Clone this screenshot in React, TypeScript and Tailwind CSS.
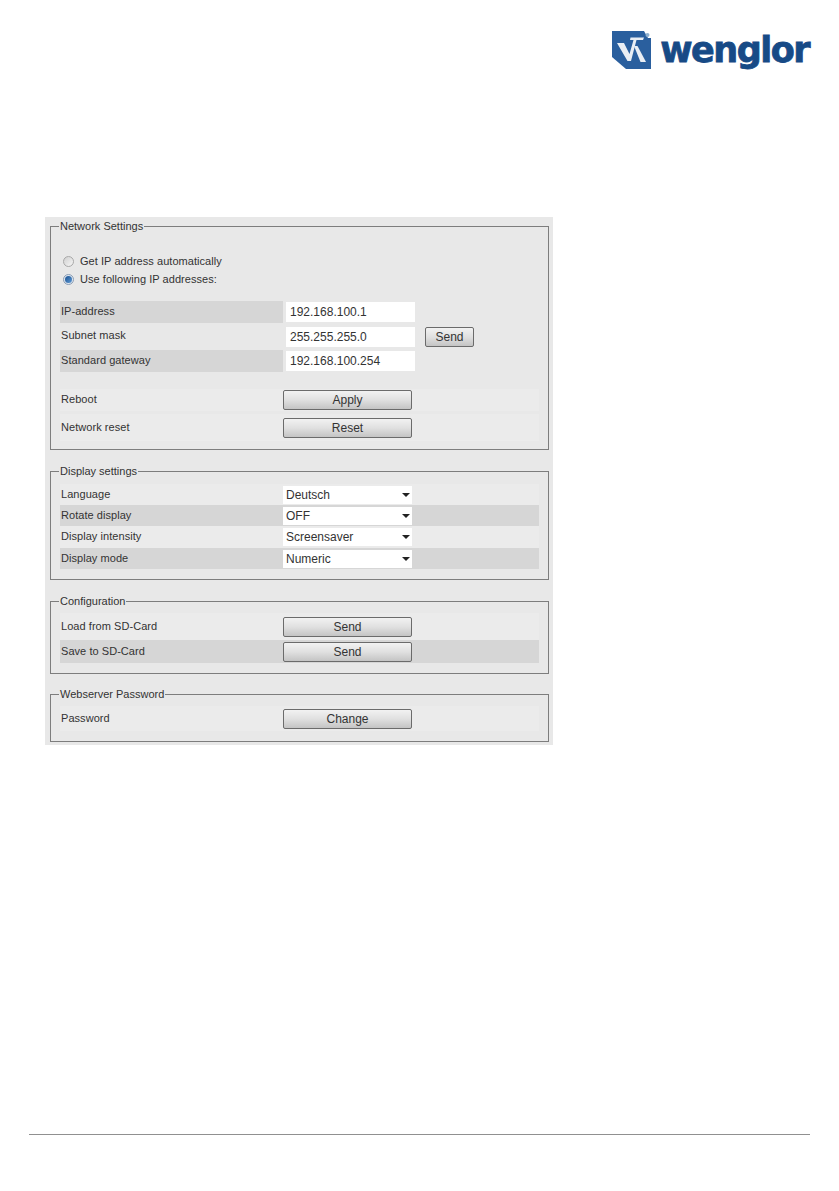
import type { ReactNode } from 'react';

const font = "font-['Liberation_Sans',Arial,sans-serif]";

function Group({ title, children, className = '' }: { title: string; children: ReactNode; className?: string }) {
  return (
    <fieldset className={`border border-[#7d7d7d] pl-[9px] pr-[9px] ${className}`}>
      <legend className="ml-[-1px] px-[1px] text-[11px] leading-[14px] text-[#333]">{title}</legend>
      {children}
    </fieldset>
  );
}

function PushButton({ label }: { label: string }) {
  return (
    <button
      type="button"
      className="flex h-[20px] w-[129px] items-center justify-center rounded-[2px] border border-[#6b6b6b] bg-gradient-to-b from-[#f2f2f2] via-[#e0e0e0] to-[#c4c4c4] text-[12px] text-[#333]"
    >
      {label}
    </button>
  );
}

function Dropdown({ value }: { value: string }) {
  return (
    <div className="flex h-[18px] w-[129px] items-center justify-between bg-white pl-[3px] pr-[1px] text-[12px] text-[#333]">
      <span>{value}</span>
      <span className="mr-[1px] h-0 w-0 border-x-[4px] border-t-[4px] border-x-transparent border-t-[#222]" />
    </div>
  );
}

function Row({
  label,
  height,
  shade,
  children,
}: {
  label: string;
  height: string;
  shade?: boolean;
  children: ReactNode;
}) {
  return (
    <div className={`flex items-center ${height} ${shade ? 'bg-[#d6d6d6]' : 'bg-[#ebebeb]'}`}>
      <span className="mt-[-1px] w-[223px] pl-[1px] text-[11px] tracking-[0.05px] text-[#333]">{label}</span>
      {children}
    </div>
  );
}

function AddressRow({ label, value, height, shade }: { label: string; value: string; height: string; shade?: boolean }) {
  return (
    <div className={`flex items-center ${height}`}>
      <span
        className={`flex h-full w-[223px] items-center pb-[2px] pl-[1px] text-[11px] tracking-[0.05px] text-[#333] ${
          shade ? 'bg-[#d6d6d6]' : ''
        }`}
      >
        {label}
      </span>
      <div className="ml-[3px] flex h-[20px] w-[129px] items-center bg-white pl-[4px] text-[12px] text-[#333]">{value}</div>
      {label === 'Subnet mask' && (
        <button
          type="button"
          className="ml-[10px] flex h-[20px] w-[49px] items-center justify-center rounded-[2px] border border-[#6b6b6b] bg-gradient-to-b from-[#f2f2f2] via-[#e0e0e0] to-[#c4c4c4] text-[12px] text-[#333]"
        >
          Send
        </button>
      )}
    </div>
  );
}

function Radio({ label, checked }: { label: string; checked?: boolean }) {
  return (
    <div className="flex h-[18px] items-center pl-[3px]">
      <span
        className={`flex h-[11px] w-[11px] items-center justify-center rounded-full border ${
          checked ? 'border-[#8a9db5] bg-[#dfe6ee]' : 'border-[#a8a8a8] bg-gradient-to-br from-[#d0d0d0] to-[#f6f6f6]'
        }`}
      >
        {checked && <span className="h-[7px] w-[7px] rounded-full bg-gradient-to-br from-[#174f8f] to-[#5f9bd6]" />}
      </span>
      <span className="ml-[6px] text-[11px] tracking-[0.05px] text-[#333]">{label}</span>
    </div>
  );
}

function Logo() {
  return (
    <div className="flex items-center">
      <svg width="39" height="38" viewBox="0 0 39 38" className="mr-[9px]">
        <path d="M0 0H39V38H14L0 26Z" fill="#2a5f9e" />
        <path d="M5 12H12L17.5 23L21.5 9H18L18.5 6.5H32L31 9H24.5L19 30H15.5Z" fill="#e9eef4" />
        <path d="M22 15H25.5L34 31H28.5Z" fill="#e9eef4" />
        <path d="M32 0H39V7H36Z" fill="#ffffff" />
        <circle cx="35.5" cy="4" r="2" fill="#8fb0cf" />
      </svg>
      <span className="font-['DejaVu_Sans',sans-serif] text-[35px] leading-[38px] font-bold tracking-[-1.5px] text-[#174a86] [-webkit-text-stroke:0.8px_#174a86]">
        wenglor
      </span>
    </div>
  );
}

export default function App() {
  return (
    <div className={`flex min-h-[1191px] flex-col bg-white ${font}`}>
      <header className="flex justify-end pr-[30px] pt-[31px]">
        <Logo />
      </header>

      <main className="ml-[45px] mt-[148px] flex w-[508px] flex-col bg-[#e8e8e8] pb-[3px] pl-[5px] pr-[4px] pt-[2px]">
        <Group title="Network Settings" className="pb-[8px]">
          <div className="mt-[19px]">
            <Radio label="Get IP address automatically" />
            <Radio label="Use following IP addresses:" checked />
          </div>
          <div className="mt-[13px] flex flex-col">
            <AddressRow label="IP-address" value="192.168.100.1" height="h-[22px]" shade />
            <AddressRow label="Subnet mask" value="255.255.255.0" height="h-[27px]" />
            <AddressRow label="Standard gateway" value="192.168.100.254" height="h-[22px]" shade />
          </div>
          <div className="mt-[17px] flex flex-col gap-[3px]">
            <Row label="Reboot" height="h-[22px]">
              <PushButton label="Apply" />
            </Row>
            <Row label="Network reset" height="h-[27px]">
              <PushButton label="Reset" />
            </Row>
          </div>
        </Group>

        <Group title="Display settings" className="mt-[14px] pb-[10px]">
          <div className="mt-[6px] flex flex-col">
            <Row label="Language" height="h-[21px]">
              <Dropdown value="Deutsch" />
            </Row>
            <Row label="Rotate display" height="h-[21px]" shade>
              <Dropdown value="OFF" />
            </Row>
            <Row label="Display intensity" height="h-[22px]">
              <Dropdown value="Screensaver" />
            </Row>
            <Row label="Display mode" height="h-[21px]" shade>
              <Dropdown value="Numeric" />
            </Row>
          </div>
        </Group>

        <Group title="Configuration" className="mt-[14px] pb-[10px]">
          <div className="mt-[5px] flex flex-col">
            <Row label="Load from SD-Card" height="h-[27px]">
              <PushButton label="Send" />
            </Row>
            <Row label="Save to SD-Card" height="h-[23px]" shade>
              <PushButton label="Send" />
            </Row>
          </div>
        </Group>

        <Group title="Webserver Password" className="mt-[13px] pb-[10px]">
          <div className="mt-[5px] flex flex-col">
            <Row label="Password" height="h-[25px]">
              <PushButton label="Change" />
            </Row>
          </div>
        </Group>
      </main>

      <footer className="mx-[29px] mt-[389px] h-px bg-[#909090]" />
    </div>
  );
}
